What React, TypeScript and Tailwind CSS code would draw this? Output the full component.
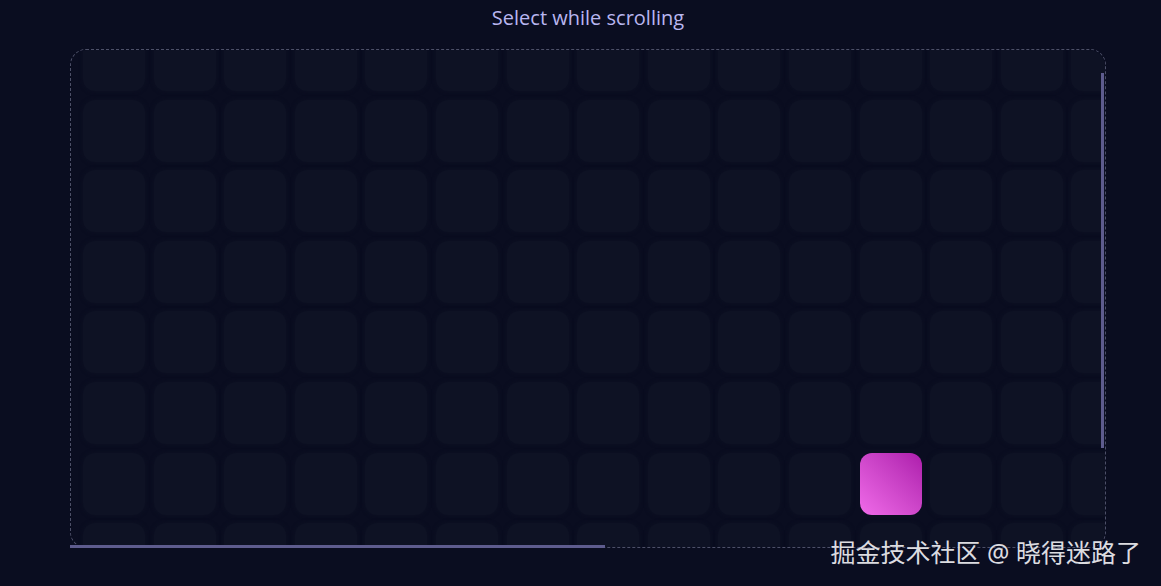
import React, { useEffect, useRef } from "react";

const ROWS = 9;
const COLS = 28;
const SELECTED = { row: 6, col: 11 };

const cells = Array.from({ length: ROWS * COLS }, (_, i) => ({
  row: Math.floor(i / COLS),
  col: i % COLS,
}));

const App: React.FC = () => {
  const scrollRef = useRef<HTMLDivElement>(null);

  // start a little scrolled down, like mid-drag
  useEffect(() => {
    if (scrollRef.current) scrollRef.current.scrollTop = 33;
  }, []);

  return (
    <div
      className="relative min-h-screen w-full overflow-hidden bg-[#0a0d20]"
      style={{ fontFamily: '"Open Sans", "Noto Sans", sans-serif' }}
    >
      <div className="ml-[70px] w-[1036px]">
        <h1 className="pt-[4px] text-center text-[20px] leading-[28px] text-[#b9b6f0]">
          Select while scrolling
        </h1>

        <div className="relative mt-[17px] h-[499px] rounded-2xl border border-dashed border-[#4d5068]">
          <div ref={scrollRef} className="h-full w-full overflow-auto rounded-2xl">
            <div className="inline-grid grid-cols-[repeat(28,62px)] gap-[8.6px] p-[12px]">
              {cells.map(({ row, col }) => {
                const active = row === SELECTED.row && col === SELECTED.col;
                return (
                  <div
                    key={`${row}-${col}`}
                    className={
                      active
                        ? "h-[62px] w-[62px] rounded-xl bg-gradient-to-tr from-[#f06ae9] to-[#ad1cac]"
                        : "h-[62px] w-[62px] rounded-xl bg-[#0e1224] shadow-[0_0_4px_rgba(14,18,36,0.9)]"
                    }
                  />
                );
              })}
            </div>
          </div>

          {/* scrollbar thumbs */}
          <div className="absolute right-[1px] top-[23px] h-[375px] w-[3px] bg-[#5e5c8e]" />
          <div className="absolute bottom-[-1px] left-[-1px] h-[3px] w-[535px] bg-[#5e5c8e]" />
        </div>
      </div>

      <div
        className="absolute right-[20px] bottom-[19px] text-[25px] leading-[30px] text-[#dcdce0]"
        style={{ fontFamily: '"Noto Sans", "Noto Sans CJK SC", sans-serif' }}
      >
        掘金技术社区 @ 晓得迷路了
      </div>
    </div>
  );
};

export default App;
